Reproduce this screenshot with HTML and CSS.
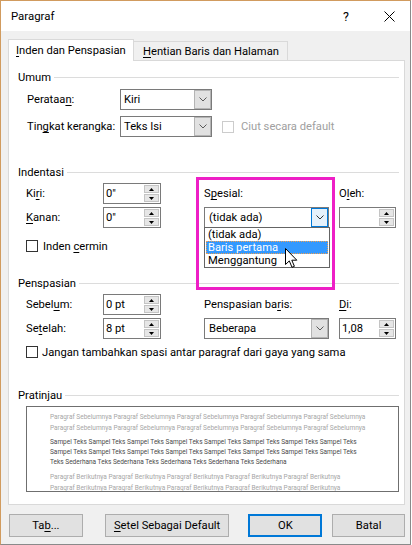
FILE: index.html
```html
<!DOCTYPE html>
<html lang="id">
<head>
<meta charset="utf-8">
<title>Paragraf</title>
<link rel="stylesheet" href="styles.css">
</head>
<body>
<div class="window">
  <div class="titlebar">
    <span class="title">Paragraf</span>
    <span class="help">?</span>
    <svg class="close" width="11" height="11" viewBox="0 0 11 11"><path d="M0.5 0.5L10.5 10.5M10.5 0.5L0.5 10.5" stroke="#000" stroke-width="1" fill="none"/></svg>
  </div>
  <div class="client">
    <div class="tabs">
      <div class="tab active"><u>I</u>nden dan Penspasian</div>
      <div class="tab inactive"><u>H</u>entian Baris dan Halaman</div>
    </div>
    <div class="panel">
      <div class="gtitle"><span>Umum</span><i class="rule"></i></div>
      <div class="grid-umum">
        <span class="lbl">Perataa<u>n</u>:</span>
        <div class="combo"><span class="val">Kiri</span><span class="arrow"><svg width="8" height="5" viewBox="0 0 8 5"><path d="M0.5 0.5L4 4L7.5 0.5" fill="none" stroke="#5a5a5a"/></svg></span></div>
        <span></span>
        <span class="lbl">Tin<u>g</u>kat kerangka:</span>
        <div class="combo"><span class="val">Teks Isi</span><span class="arrow"><svg width="8" height="5" viewBox="0 0 8 5"><path d="M0.5 0.5L4 4L7.5 0.5" fill="none" stroke="#5a5a5a"/></svg></span></div>
        <div class="cb disabled"><span class="box"></span><span>Ciut secara default</span></div>
      </div>

      <div class="gtitle g-indent"><span>Indentasi</span><i class="rule"></i></div>
      <div class="grid-six">
        <span class="lbl">Ki<u>r</u>i:</span>
        <div class="spin"><span class="val">0"</span><span class="btns"><span class="b"><svg width="5" height="3" viewBox="0 0 5 3"><path d="M2.5 0L5 3H0Z"/></svg></span><span class="b"><svg width="5" height="3" viewBox="0 0 5 3"><path d="M0 0H5L2.5 3Z"/></svg></span></span></div>
        <span></span>
        <span class="lbl">S<u>p</u>esial:</span>
        <span></span>
        <span class="lbl">O<u>l</u>eh:</span>

        <span class="lbl"><u>K</u>anan:</span>
        <div class="spin"><span class="val">0"</span><span class="btns"><span class="b"><svg width="5" height="3" viewBox="0 0 5 3"><path d="M2.5 0L5 3H0Z"/></svg></span><span class="b"><svg width="5" height="3" viewBox="0 0 5 3"><path d="M0 0H5L2.5 3Z"/></svg></span></span></div>
        <span></span>
        <div class="combo open"><span class="val">(tidak ada)</span><span class="arrow hot"><svg width="8" height="5" viewBox="0 0 8 5"><path d="M0.5 0.5L4 4L7.5 0.5" fill="none" stroke="#333"/></svg></span>
          <div class="list">
            <div class="item">(tidak ada)</div>
            <div class="item sel">Baris pertama</div>
            <div class="item">Menggantung</div>
          </div>
        </div>
        <span></span>
        <div class="spin"><span class="val"></span><span class="btns"><span class="b"><svg width="5" height="3" viewBox="0 0 5 3"><path d="M2.5 0L5 3H0Z"/></svg></span><span class="b"><svg width="5" height="3" viewBox="0 0 5 3"><path d="M0 0H5L2.5 3Z"/></svg></span></span></div>
      </div>
      <div class="cb cb-mirror"><span class="box"></span><span>Inden <u>c</u>ermin</span></div>

      <div class="gtitle g-spacing"><span>Penspasian</span><i class="rule"></i></div>
      <div class="grid-six">
        <span class="lbl">Sebel<u>u</u>m:</span>
        <div class="spin"><span class="val">0 pt</span><span class="btns"><span class="b"><svg width="5" height="3" viewBox="0 0 5 3"><path d="M2.5 0L5 3H0Z"/></svg></span><span class="b"><svg width="5" height="3" viewBox="0 0 5 3"><path d="M0 0H5L2.5 3Z"/></svg></span></span></div>
        <span></span>
        <span class="lbl">Penspasian ba<u>r</u>is:</span>
        <span></span>
        <span class="lbl"><u>D</u>i:</span>

        <span class="lbl">Se<u>t</u>elah:</span>
        <div class="spin"><span class="val">8 pt</span><span class="btns"><span class="b"><svg width="5" height="3" viewBox="0 0 5 3"><path d="M2.5 0L5 3H0Z"/></svg></span><span class="b"><svg width="5" height="3" viewBox="0 0 5 3"><path d="M0 0H5L2.5 3Z"/></svg></span></span></div>
        <span></span>
        <div class="combo"><span class="val">Beberapa</span><span class="arrow"><svg width="8" height="5" viewBox="0 0 8 5"><path d="M0.5 0.5L4 4L7.5 0.5" fill="none" stroke="#5a5a5a"/></svg></span></div>
        <span></span>
        <div class="spin"><span class="val">1,08</span><span class="btns"><span class="b"><svg width="5" height="3" viewBox="0 0 5 3"><path d="M2.5 0L5 3H0Z"/></svg></span><span class="b"><svg width="5" height="3" viewBox="0 0 5 3"><path d="M0 0H5L2.5 3Z"/></svg></span></span></div>
      </div>
      <div class="cb cb-same"><span class="box"></span><span>Jangan tambahkan spasi antar paragraf dari gaya yang sama</span></div>

      <div class="gtitle g-preview"><span>Pratinjau</span><i class="rule"></i></div>
      <div class="preview">
        <div class="pgroup prev">
          <div>Paragraf Sebelumnya Paragraf Sebelumnya Paragraf Sebelumnya Paragraf Sebelumnya Paragraf Sebelumnya</div>
          <div>Paragraf Sebelumnya Paragraf Sebelumnya Paragraf Sebelumnya Paragraf Sebelumnya Paragraf Sebelumnya</div>
        </div>
        <div class="pgroup sample">
          <div>Sampel Teks Sampel Teks Sampel Teks Sampel Teks Sampel Teks Sampel Teks Sampel Teks Sampel Teks</div>
          <div>Sampel Teks Sampel Teks Sampel Teks Sampel Teks Sampel Teks Sampel Teks Sampel Teks Sampel Teks</div>
          <div>Teks Sederhana Teks Sederhana Teks Sederhana Teks Sederhana Teks Sederhana</div>
        </div>
        <div class="pgroup next">
          <div>Paragraf Berikutnya Paragraf Berikutnya Paragraf Berikutnya Paragraf Berikutnya Paragraf Berikutnya</div>
          <div>Paragraf Berikutnya Paragraf Berikutnya Paragraf Berikutnya Paragraf Berikutnya Paragraf Berikutnya</div>
        </div>
      </div>
    </div>
    <div class="buttons">
      <button class="btn btn-tab">Ta<u>b</u>...</button>
      <button class="btn btn-default"><u>S</u>etel Sebagai Default</button>
      <button class="btn btn-ok">OK</button>
      <button class="btn btn-cancel">Batal</button>
    </div>
  </div>
  <div class="highlight"></div>
  <svg class="cursor" width="13" height="21" viewBox="0 0 13 21"><path d="M0.5 0.5L0.5 16.5L4.3 12.9L7 19.3L9.4 18.3L6.8 12.2L11.8 12.2Z" fill="#fff" stroke="#000" stroke-width="1" stroke-linejoin="miter"/></svg>
</div>
</body>
</html>
```

FILE: styles.css
```css
* { box-sizing: border-box; }
html, body { margin: 0; padding: 0; }
body {
  background: #fff;
  font-family: Roboto, "Noto Sans", sans-serif;
  font-size: 11.2px;
  color: #000;
  width: 412px;
  height: 545px;
  overflow: hidden;
}
u { text-decoration: underline; text-underline-offset: 1.5px; }

.window {
  position: relative;
  width: 411px;
  height: 545px;
  border: 1px solid #8a8a8a;
  border-left-color: #d19b5e;
  border-top-color: #d19b5e;
  background: #f0f0f0;
  display: flex;
  flex-direction: column;
}

.titlebar {
  flex: none;
  height: 30px;
  background: #fff;
  display: flex;
  align-items: center;
  padding-left: 10px;
}
.title { flex: 1; font-size: 11.4px; }
.help { margin-right: 35px; font-size: 12.5px; }
.close { margin-right: 15px; display: block; }

.client {
  flex: 1;
  padding: 8px 5px 0 7px;
  display: flex;
  flex-direction: column;
}

.tabs {
  height: 21px;
  display: flex;
  align-items: flex-end;
}
.tab {
  display: flex;
  align-items: center;
  border: 1px solid #d9d9d9;
  border-bottom: 0;
}
.tab.active {
  position: relative;
  z-index: 1;
  width: 126px;
  height: 22px;
  margin-bottom: -1px;
  background: #fff;
  padding: 0 0 1px 7px;
}
.tab.inactive {
  width: 154px;
  height: 19px;
  border-left: 0;
  background: #f0f0f0;
  padding-left: 9px;
}

.panel {
  height: 445px;
  background: #fff;
  border: 1px solid #d9d9d9;
  padding: 8px 5px 0 9px;
}

.gtitle {
  height: 16px;
  display: flex;
  align-items: center;
}
.rule {
  flex: 1;
  height: 1px;
  background: #dcdcdc;
  margin-left: 3px;
}
.g-indent { margin-top: 27px; }
.g-spacing { margin-top: 23px; }
.g-preview { margin-top: 29px; }

.lbl { display: flex; align-items: center; white-space: nowrap; }

.grid-umum {
  margin-top: 4px;
  padding-left: 9px;
  display: grid;
  grid-template-columns: 93px 92px auto;
  grid-auto-rows: 21px;
  row-gap: 6px;
}

.grid-six {
  margin-top: 3px;
  padding-left: 8px;
  display: grid;
  grid-template-columns: 77px 58px 43px 125px 10px 57px;
  grid-auto-rows: 21px;
  row-gap: 3px;
}

.combo {
  position: relative;
  height: 21px;
  border: 1px solid #7a7a7a;
  background: #fff;
  display: flex;
  align-items: stretch;
}
.combo .val {
  flex: 1;
  display: flex;
  align-items: center;
  padding-left: 3px;
  white-space: nowrap;
}
.grid-six .combo .val { padding-left: 4px; }
.arrow {
  width: 17px;
  flex: none;
  background: #e1e1e1;
  border: 1px solid #b4b4b4;
  display: flex;
  align-items: center;
  justify-content: center;
}
.arrow svg { display: block; }
.arrow.hot {
  background: #e5f1fb;
  border-color: #0078d7;
}

.list {
  position: absolute;
  z-index: 5;
  top: 100%;
  left: -1px;
  width: 126px;
  border: 1px solid #646464;
  background: #fff;
  padding: 0 1px;
}
.item {
  height: 13px;
  line-height: 13px;
  padding-left: 2px;
  white-space: nowrap;
}
.item.sel {
  background: #3399ff;
  color: #fff;
  outline: 1px dotted #f0a050;
  outline-offset: -1px;
}

.spin {
  height: 21px;
  border: 1px solid #7a7a7a;
  background: #fff;
  display: flex;
}
.spin .val {
  flex: 1;
  display: flex;
  align-items: center;
  padding-left: 2px;
  white-space: nowrap;
}
.btns {
  width: 16px;
  flex: none;
  display: flex;
  flex-direction: column;
  padding: 1px 1px 1px 0;
  gap: 1px;
}
.btns .b {
  flex: 1;
  background: #e6e6e6;
  border: 1px solid #c4c4c4;
  display: flex;
  align-items: center;
  justify-content: center;
}
.btns svg { display: block; fill: #000; }

.cb {
  display: flex;
  align-items: center;
  gap: 5px;
  white-space: nowrap;
}
.box {
  width: 12px;
  height: 12px;
  border: 1px solid #333;
  background: #fff;
  flex: none;
}
.grid-umum .cb { margin-left: 10px; gap: 7px; }
.cb.disabled { color: #a0a0a0; }
.cb.disabled .box { border-color: #cccccc; }
.cb-mirror { margin-top: 12px; padding-left: 8px; height: 12px; }
.cb-same { margin-top: 7px; padding-left: 8px; height: 12px; gap: 4px; }

.preview {
  margin-top: 3px;
  margin-left: 8px;
  width: 373px;
  height: 86px;
  border: 1px solid #6f6f6f;
  background: #fff;
  overflow: hidden;
  padding: 5px 0 0 23px;
  font-size: 6.5px;
  line-height: 10.5px;
  white-space: nowrap;
}
.pgroup.prev, .pgroup.next { color: #a6a6a6; }
.pgroup.sample { color: #4a4a4a; line-height: 10px; margin: 4px 0 5px; }

.buttons {
  margin-top: 9px;
  display: flex;
}
.btn {
  height: 23px;
  font: inherit;
  color: #000;
  background: #e1e1e1;
  border: 1px solid #adadad;
  padding: 0;
  margin: 0;
  display: flex;
  align-items: center;
  justify-content: center;
}
.btn-tab { width: 74px; margin-left: 1px; }
.btn-default { width: 125px; margin-left: 22px; }
.btn-ok { width: 74px; margin-left: 19px; border: 2px solid #0078d7; }
.btn-cancel { width: 73px; margin-left: 10px; }

.highlight {
  position: absolute;
  left: 195px;
  top: 176px;
  width: 139px;
  height: 113px;
  border: 3px solid #ee1fc6;
  pointer-events: none;
}
.cursor {
  position: absolute;
  left: 284px;
  top: 247px;
  z-index: 10;
}
```
